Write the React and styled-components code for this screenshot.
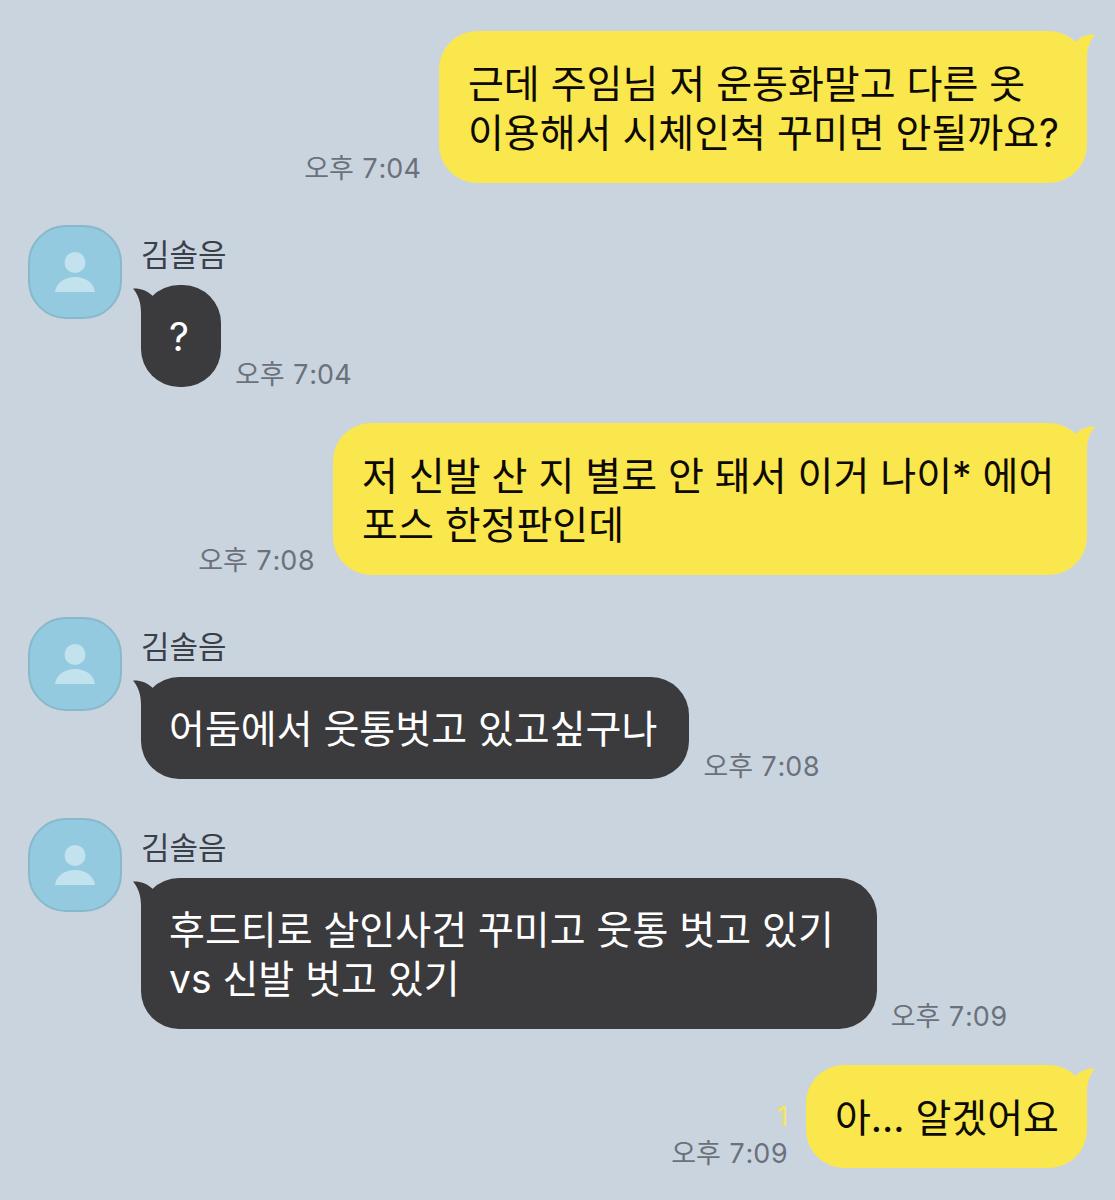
import React from "react";
import styled, { createGlobalStyle, css } from "styled-components";

const color = {
  background: "#cad4df",
  mine: "#fae64d",
  mineText: "#0d0a02",
  theirs: "#3b3a3d",
  theirsText: "#ffffff",
  name: "#3a4049",
  time: "#6a717b",
  avatar: "#93cadf",
  avatarBorder: "#87b9cb",
  avatarIcon: "#c2e2ee",
};

const GlobalStyle = createGlobalStyle`
  *, *::before, *::after { box-sizing: border-box; }
  body {
    margin: 0;
    background: ${color.background};
    font-family: Inter, "Noto Sans CJK KR", sans-serif;
  }
`;

const Room = styled.main`
  min-height: 100vh;
  padding: 31px 28px;
  background: ${color.background};
`;

const MessageList = styled.ol`
  display: flex;
  flex-direction: column;
  margin: 0;
  padding: 0;
  list-style: none;
`;

const Sent = styled.li`
  display: flex;
  justify-content: flex-end;
  align-items: flex-end;
  gap: 18px;
`;

const Received = styled.li`
  display: flex;
  align-items: flex-start;
  gap: 19px;

  ${Sent} + & {
    margin-top: 42px;
  }

  & + & {
    margin-top: 39px;
  }

  & + ${Sent} {
    margin-top: 36px;
  }
`;

const Avatar = styled.div`
  display: flex;
  flex: none;
  align-items: center;
  justify-content: center;
  width: 94px;
  height: 94px;
  border: 2px solid ${color.avatarBorder};
  border-radius: 38px;
  background: ${color.avatar};
`;

const Content = styled.div`
  min-width: 0;
`;

const Name = styled.div`
  padding: 10px 0;
  color: ${color.name};
  font-size: 31px;
  line-height: 40px;
`;

const BubbleRow = styled.div`
  display: flex;
  align-items: flex-end;
  gap: 14px;
`;

const Bubble = styled.div`
  position: relative;
  min-width: 80px;
  max-width: 754px;
  border-radius: 38px;
  font-size: 39px;
  line-height: 49px;
  white-space: break-spaces;

  ${({ $mine }) =>
    $mine
      ? css`
          padding: 28px 28px 26px 29px;
          background: ${color.mine};
          color: ${color.mineText};
        `
      : css`
          padding: 27px 32px 26px 28px;
          background: ${color.theirs};
          color: ${color.theirsText};
        `}
`;

const TailShape = styled.svg`
  position: absolute;
  top: 3px;
  width: 28px;
  height: 36px;

  ${({ $mine }) =>
    $mine
      ? css`
          right: -8px;
          transform: scaleX(-1);
          fill: ${color.mine};
        `
      : css`
          left: -8px;
          fill: ${color.theirs};
        `}
`;

const Meta = styled.div`
  display: flex;
  flex: none;
  flex-direction: column;
  align-items: flex-end;
  gap: 13px;
  padding-bottom: ${({ $mine }) => ($mine ? "2px" : "0")};
  color: ${color.time};
  font-size: 27px;
  line-height: 24px;
  font-variant-numeric: tabular-nums;
`;

const Unread = styled.span`
  color: ${color.mine};
  font-variant-numeric: normal;
`;

function Tail({ mine }) {
  return (
    <TailShape $mine={mine} viewBox="0 0 28 36" aria-hidden="true">
      <path d="M0 .5C7.500 .2 14 2.300 19.300 7.600L28 20 22 36H8V25C8 15 5.500 7 0 .5Z" />
    </TailShape>
  );
}

function Person() {
  return (
    <svg width="40" height="40" viewBox="0 0 40 40" fill={color.avatarIcon} aria-hidden="true">
      <circle cx="20" cy="10.500" r="10.500" />
      <path d="M0 40C1 31.500 9 25 20 25s19 6.500 20 15Z" />
    </svg>
  );
}

const messages = [
  { mine: true, time: "7:04", text: "근데 주임님 저 운동화말고 다른 옷\n이용해서 시체인척 꾸미면 안될까요?" },
  { name: "김솔음", time: "7:04", text: "?" },
  { mine: true, time: "7:08", text: "저 신발 산 지 별로 안 돼서 이거 나이* 에어포스 한정판인데" },
  { name: "김솔음", time: "7:08", text: "어둠에서 웃통벗고 있고싶구나" },
  { name: "김솔음", time: "7:09", text: "후드티로 살인사건 꾸미고 웃통 벗고 있기 \nvs 신발 벗고 있기" },
  { mine: true, time: "7:09", unread: 1, text: "아... 알겠어요" },
];

function SentMessage({ time, unread, text }) {
  return (
    <Sent>
      <Meta $mine>
        {unread && <Unread>{unread}</Unread>}
        <time>오후 {time}</time>
      </Meta>
      <Bubble $mine>
        <Tail mine />
        {text}
      </Bubble>
    </Sent>
  );
}

function ReceivedMessage({ name, time, text }) {
  return (
    <Received>
      <Avatar>
        <Person />
      </Avatar>
      <Content>
        <Name>{name}</Name>
        <BubbleRow>
          <Bubble>
            <Tail />
            {text}
          </Bubble>
          <Meta>
            <time>오후 {time}</time>
          </Meta>
        </BubbleRow>
      </Content>
    </Received>
  );
}

export default function App() {
  return (
    <>
      <GlobalStyle />
      <Room>
        <MessageList>
          {messages.map((message, index) =>
            message.mine ? (
              <SentMessage key={index} {...message} />
            ) : (
              <ReceivedMessage key={index} {...message} />
            )
          )}
        </MessageList>
      </Room>
    </>
  );
}
